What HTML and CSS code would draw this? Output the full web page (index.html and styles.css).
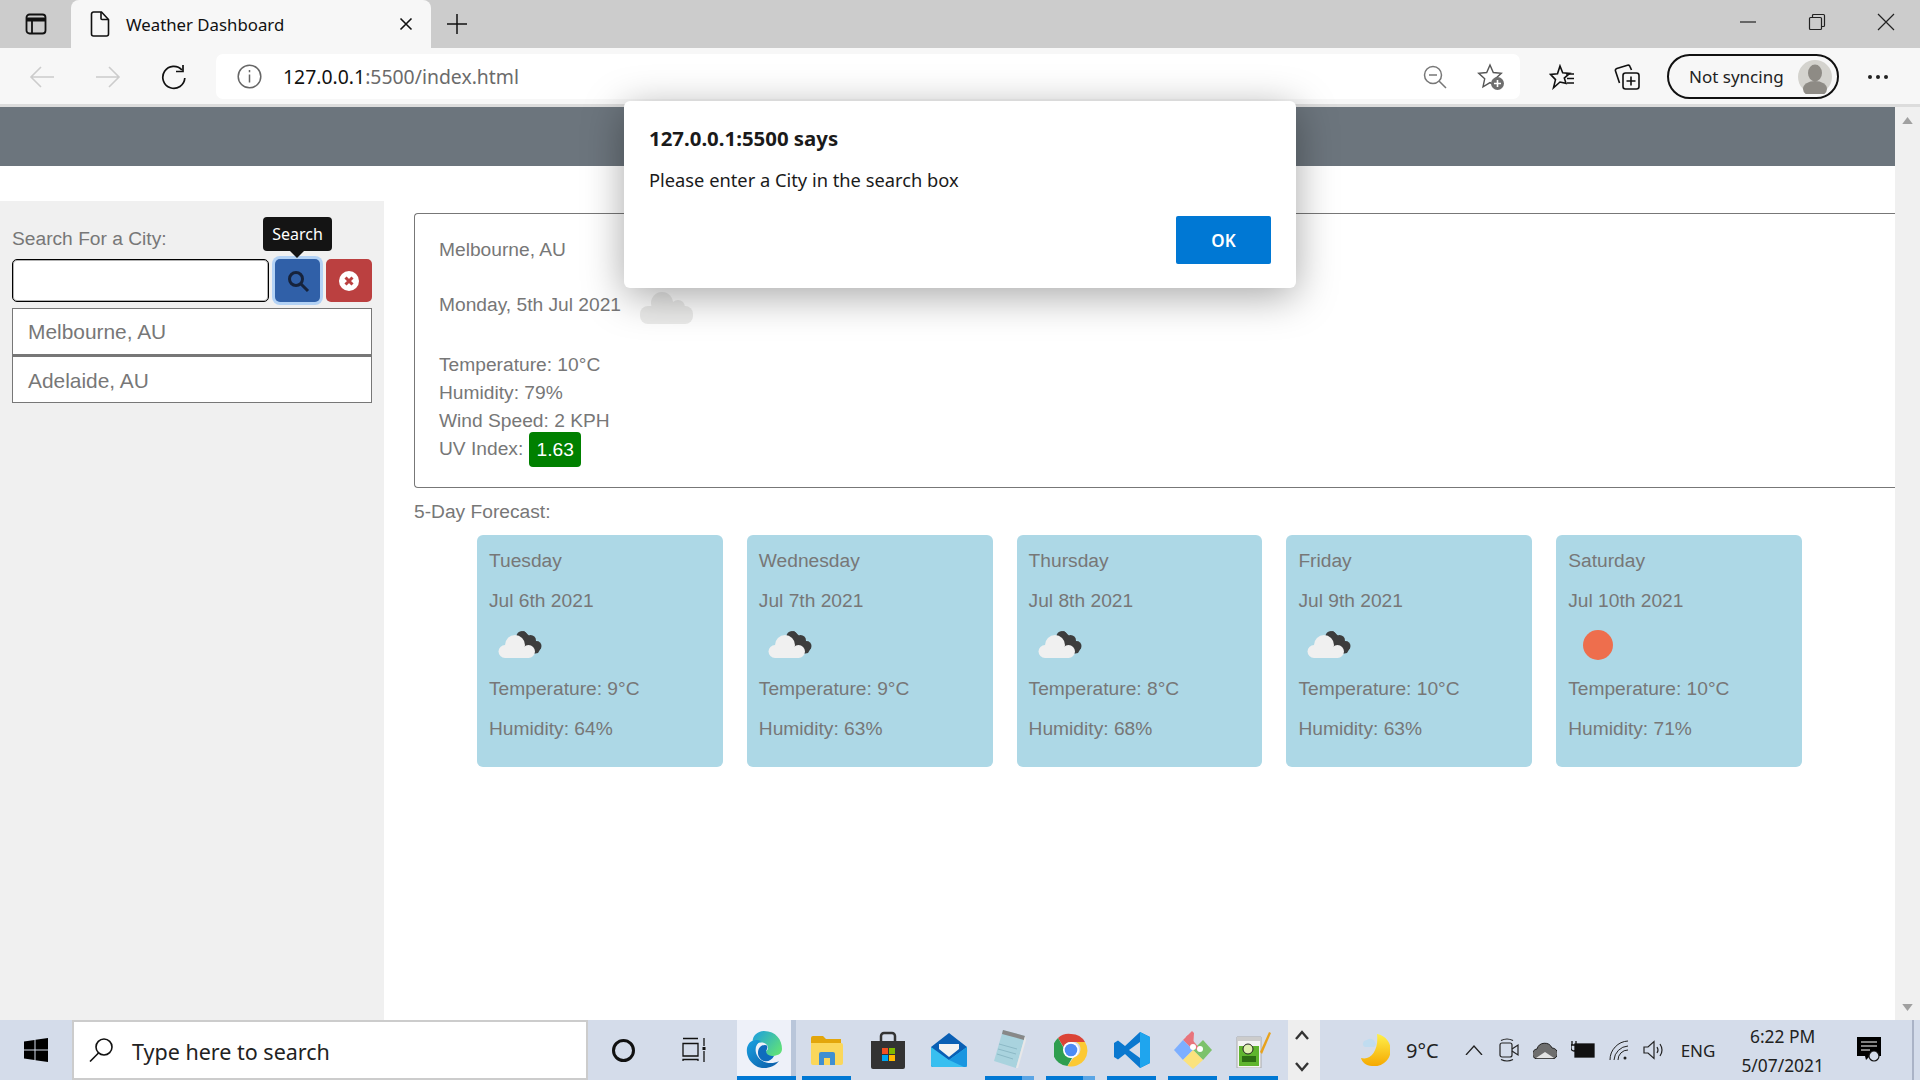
FILE: index.html
```html
<!DOCTYPE html>
<html lang="en">
<head>
    <meta charset="UTF-8">
    <title>Weather Dashboard</title>
    <link rel="stylesheet" href="styles.css">
</head>
<body>
<svg class="defs" width="0" height="0">
    <symbol id="cloud" viewBox="0 0 60 40">
        <path d="M21 9l6-3 14 13 3 4-3 5-10 2-12-10z" fill="#3d3d3d"/>
        <circle cx="25" cy="11.500" r="5.500" fill="#3d3d3d"/>
        <circle cx="33.500" cy="15.500" r="5.500" fill="#3d3d3d"/>
        <circle cx="39.500" cy="21" r="5" fill="#3d3d3d"/>
        <circle cx="8" cy="26.500" r="6.500" fill="#f0f0f0"/>
        <circle cx="18" cy="20" r="10" fill="#f0f0f0"/>
        <circle cx="31.500" cy="26.500" r="6.500" fill="#f0f0f0"/>
        <rect x="8" y="22" width="24" height="11" fill="#f0f0f0"/>
    </symbol>
</svg>

<div class="screen">
    <div class="tabstrip">
        <div class="tab-panel">
            <svg width="24" height="24" viewBox="0 0 24 24" fill="none" stroke="#111" stroke-width="1.800"><rect x="2.500" y="2.500" width="19" height="19" rx="3"/><path d="M3 7.500h18" stroke-width="4"/><path d="M8 8v13"/></svg>
        </div>
        <div class="tab">
            <svg width="20" height="26" viewBox="0 0 20 26" fill="none" stroke="#111" stroke-width="1.600"><path d="M3.500 1h8l7 7.500V23a2 2 0 0 1-2 2h-13a2 2 0 0 1-2-2V3a2 2 0 0 1 2-2z"/><path d="M11 1v6.500a1 1 0 0 0 1 1h6"/></svg>
            <span class="tab-title">Weather Dashboard</span>
            <svg class="tab-close" width="14" height="14" viewBox="0 0 14 14" stroke="#111" stroke-width="1.600"><path d="M1.500 1.500l11 11M12.500 1.500l-11 11"/></svg>
        </div>
        <svg class="new-tab" width="22" height="22" viewBox="0 0 22 22" stroke="#111" stroke-width="1.500"><path d="M11 1v20M1 11h20"/></svg>
        <div class="winbtns">
            <svg width="18" height="18" viewBox="0 0 18 18" stroke="#222" stroke-width="1.200" fill="none"><path d="M1 9h16"/></svg>
            <svg width="18" height="18" viewBox="0 0 18 18" stroke="#222" stroke-width="1.200" fill="none"><rect x="1.500" y="4.500" width="12" height="12" rx="1"/><path d="M4.500 4V2.500a1 1 0 0 1 1-1h10a1 1 0 0 1 1 1v10a1 1 0 0 1-1 1H14"/></svg>
            <svg width="18" height="18" viewBox="0 0 18 18" stroke="#222" stroke-width="1.200" fill="none"><path d="M1 1l16 16M17 1L1 17"/></svg>
        </div>
    </div>

    <div class="toolbar">
        <div class="navbtns">
            <svg width="26" height="26" viewBox="0 0 26 26" fill="none" stroke="#ccc" stroke-width="1.600"><path d="M25 13H2M12 3L2 13l10 10"/></svg>
            <svg width="26" height="26" viewBox="0 0 26 26" fill="none" stroke="#ccc" stroke-width="1.600"><path d="M1 13h23M14 3l10 10-10 10"/></svg>
            <svg width="26" height="26" viewBox="0 0 26 26" fill="none" stroke="#111" stroke-width="1.700"><path d="M21 6a11 11 0 1 0 2.800 8"/><path d="M22 1v6.500h-7"/></svg>
        </div>
        <div class="addressbar">
            <svg width="25" height="25" viewBox="0 0 25 25" fill="none" stroke="#666" stroke-width="1.500"><circle cx="12.500" cy="12.500" r="11.300"/><path d="M12.500 10.500v8M12.500 6v2.200"/></svg>
            <div class="url">127.0.0.1<span class="url-rest">:5500/index.html</span></div>
            <svg class="zoom-icon" width="24" height="24" viewBox="0 0 24 24" fill="none" stroke="#777" stroke-width="1.500"><circle cx="10" cy="10" r="8.500"/><path d="M16 16l7 7M6 10h8"/></svg>
            <svg class="fav-add" width="28" height="28" viewBox="0 0 28 28"><path d="M13 2l3.300 7.500 8 .8-6 5.500 1.700 8-7-4.200-7 4.200 1.700-8-6-5.500 8-.8z" fill="none" stroke="#555" stroke-width="1.400"/><circle cx="20.500" cy="20.500" r="6.500" fill="#6e6e6e"/><path d="M20.500 17v7M17 20.500h7" stroke="#fff" stroke-width="1.600"/></svg>
        </div>
        <div class="toolbar-right">
            <svg class="tool-fav" width="26" height="26" viewBox="0 0 26 26" fill="none" stroke="#111" stroke-width="1.600"><path d="M11 2l2.700 6.800 7 .6-5.400 4.700 1.700 5.200-6-1.300-6.500 5.800 2-8.200-5-5.200 7-.6z"/><path d="M17 10h8M18 14.500h7M18 19h7"/></svg>
            <svg class="tool-coll" width="26" height="26" viewBox="0 0 26 26" fill="none" stroke="#111" stroke-width="1.600"><rect x="9" y="9" width="16" height="16" rx="2.500"/><path d="M17 12.500v9M12.500 17h9"/><path d="M5.500 19L1.500 7a2 2 0 0 1 1.300-2.500L13.500 1.300a2 2 0 0 1 2.500 1.300L17.500 6"/></svg>
            <div class="sync-pill">
                <span>Not syncing</span>
                <svg width="34" height="34" viewBox="0 0 34 34"><circle cx="17" cy="17" r="17" fill="#d4d3ce"/><ellipse cx="17" cy="13" rx="7" ry="8.500" fill="#8e8b85"/><ellipse cx="17" cy="29" rx="12" ry="8" fill="#8e8b85"/></svg>
            </div>
            <div class="more-dots"><i></i><i></i><i></i></div>
        </div>
    </div>

    <div class="viewport">
        <div class="page">
            <div class="page-header"></div>
            <div class="content">
                <aside class="sidebar">
                    <div class="search-label">Search For a City:</div>
                    <div class="search-row">
                        <input class="search-input" type="text">
                        <button class="icon-btn btn-search">
                            <svg width="24" height="24" viewBox="0 0 24 24" fill="none" stroke="#16233c" stroke-width="3"><circle cx="10" cy="10" r="6.500"/><path d="M15 15l7 7"/></svg>
                            <span class="tooltip">Search</span>
                        </button>
                        <button class="icon-btn btn-clear">
                            <svg width="22" height="22" viewBox="0 0 22 22"><circle cx="11" cy="11" r="10" fill="#fff"/><path d="M7.500 7.500l7 7M14.500 7.500l-7 7" stroke="#bb4040" stroke-width="3"/></svg>
                        </button>
                    </div>
                    <ul class="city-list">
                        <li>Melbourne, AU</li>
                        <li>Adelaide, AU</li>
                    </ul>
                </aside>
                <main class="main">
                    <section class="current">
                        <div class="city">Melbourne, AU</div>
                        <div class="date-row">
                            <span>Monday, 5th Jul 2021</span>
                            <svg class="current-icon" width="54" height="34" viewBox="0 0 54 34" fill="#ebebea"><circle cx="22" cy="12" r="11"/><circle cx="38" cy="16" r="7"/><rect y="15" width="53" height="18" rx="8"/></svg>
                        </div>
                        <div class="stats">
                            <div>Temperature: 10°C</div>
                            <div>Humidity: 79%</div>
                            <div>Wind Speed: 2 KPH</div>
                            <div class="uv-row">UV Index: <span class="uv">1.63</span></div>
                        </div>
                    </section>
                    <div class="forecast-title">5-Day Forecast:</div>
                    <div class="forecast">
                        <div class="day-card">
                            <p>Tuesday</p><p>Jul 6th 2021</p>
                            <div class="day-icon"><svg width="60" height="40"><use href="#cloud"/></svg></div>
                            <p>Temperature: 9°C</p><p>Humidity: 64%</p>
                        </div>
                        <div class="day-card">
                            <p>Wednesday</p><p>Jul 7th 2021</p>
                            <div class="day-icon"><svg width="60" height="40"><use href="#cloud"/></svg></div>
                            <p>Temperature: 9°C</p><p>Humidity: 63%</p>
                        </div>
                        <div class="day-card">
                            <p>Thursday</p><p>Jul 8th 2021</p>
                            <div class="day-icon"><svg width="60" height="40"><use href="#cloud"/></svg></div>
                            <p>Temperature: 8°C</p><p>Humidity: 68%</p>
                        </div>
                        <div class="day-card">
                            <p>Friday</p><p>Jul 9th 2021</p>
                            <div class="day-icon"><svg width="60" height="40"><use href="#cloud"/></svg></div>
                            <p>Temperature: 10°C</p><p>Humidity: 63%</p>
                        </div>
                        <div class="day-card">
                            <p>Saturday</p><p>Jul 10th 2021</p>
                            <div class="day-icon"><svg width="60" height="40"><circle cx="22" cy="20" r="15" fill="#ee6e4d"/></svg></div>
                            <p>Temperature: 10°C</p><p>Humidity: 71%</p>
                        </div>
                    </div>
                </main>
            </div>
        </div>
        <div class="scrollbar">
            <svg width="11" height="7" viewBox="0 0 12 8"><path d="M6 0l6 8H0z" fill="#a0a0a0"/></svg>
            <svg width="11" height="7" viewBox="0 0 12 8"><path d="M6 8L0 0h12z" fill="#a0a0a0"/></svg>
        </div>
    </div>

    <div class="taskbar">
        <div class="start">
            <svg width="24" height="24" viewBox="0 0 24 24" fill="#000"><path d="M0 3.500l10.500-1.500v9.500H0zM11.500 1.800L24 0v11.500H11.500zM0 12.500h10.500V22L0 20.500zM11.500 12.500H24V24l-12.500-1.800z"/></svg>
        </div>
        <div class="task-search">
            <svg width="24" height="24" viewBox="0 0 24 24" fill="none" stroke="#111" stroke-width="1.600"><circle cx="15" cy="9" r="8"/><path d="M9.500 15L1 23.500"/></svg>
            <span>Type here to search</span>
        </div>
        <div class="cortana"><i></i></div>
        <div class="taskview">
            <svg width="26" height="26" viewBox="0 0 26 26" fill="none" stroke="#111" stroke-width="1.300"><path d="M1 1.500h15M1 6.500h15V19H1zM1 24v-1.500h15V24M22 1v8M22 14v11"/><rect x="20.500" y="10" width="3" height="3" fill="#111" stroke="none"/></svg>
        </div>
        <div class="task-item active run-edge">
            <svg width="36" height="38" viewBox="0 0 36 38">
                <defs>
                    <linearGradient id="edgeTop" x1="0" y1="0" x2="1" y2="0.700"><stop offset="0" stop-color="#1b9de2"/><stop offset="1" stop-color="#5fe07a"/></linearGradient>
                    <linearGradient id="edgeLow" x1="0" y1="0" x2="1" y2="1"><stop offset="0" stop-color="#1aa0e0"/><stop offset="1" stop-color="#0c5aa6"/></linearGradient>
                </defs>
                <path d="M18 0C30 0 36 9 36 18c0 5-5 7-10 7-6 0-7-3-6-5 2-1 3-3 1-6-3-4-10-3-13 1C4 9 9 0 18 0z" fill="url(#edgeTop)"/>
                <path d="M1 17C3 9 10 8 15 10c-6 3-7 10-3 16 4 6 14 8 21 4-5 7-16 9-23 5C3 31 0 24 1 17z" fill="url(#edgeLow)"/>
                <path d="M12 22c0-5 3-8 7-8 3 0 3 3 1 6 0 3 3 5 8 5-2 4-6 6-10 5-4-1-6-5-6-8z" fill="#0f6cbd"/>
            </svg>
        </div>
        <div class="task-item run">
            <svg width="32" height="30" viewBox="0 0 32 30"><path d="M0 3a2 2 0 0 1 2-2h10l3 3h15v6H0z" fill="#e3a60b"/><path d="M0 8h30a2 2 0 0 1 2 2v18a2 2 0 0 1-2 2H2a2 2 0 0 1-2-2z" fill="#fbd75b"/><path d="M8 30V19a2 2 0 0 1 2-2h12a2 2 0 0 1 2 2v11h-5v-7h-6v7z" fill="#3f8fd2"/></svg>
        </div>
        <div class="task-item">
            <svg width="34" height="38" viewBox="0 0 34 38"><path d="M10 12V5a3 3 0 0 1 3-3h8a3 3 0 0 1 3 3v7" fill="none" stroke="#333" stroke-width="2.500"/><path d="M0 10h34v26a2 2 0 0 1-2 2H2a2 2 0 0 1-2-2z" fill="#333"/><rect x="11" y="17" width="6" height="6" fill="#f25022"/><rect x="18" y="17" width="6" height="6" fill="#7fba00"/><rect x="11" y="24" width="6" height="6" fill="#00a4ef"/><rect x="18" y="24" width="6" height="6" fill="#ffb900"/></svg>
        </div>
        <div class="task-item">
            <svg width="36" height="34" viewBox="0 0 36 34"><path d="M18 0l18 14v18a2 2 0 0 1-2 2H2a2 2 0 0 1-2-2V14z" fill="#0a5fb4"/><path d="M8 11h20v5l-10 8-10-8z" fill="#f2f2f2"/><path d="M0 14l18 13 18-13v18a2 2 0 0 1-2 2H2a2 2 0 0 1-2-2z" fill="#38bff0"/><path d="M18 27l18-13v18a2 2 0 0 1-2 2h-1z" fill="#1a96e0"/></svg>
        </div>
        <div class="task-item run split">
            <svg width="34" height="40" viewBox="0 0 34 40"><path d="M10 0l22 6-9 32-22-7z" fill="#a9d3de"/><path d="M10 0l22 6-1 4-22-6z" fill="#888"/><path d="M32 6l1 4-8 28h-2z" fill="#e8e8e8"/><path d="M6 14l18 5M5 19l18 5M4 24l16 5" stroke="#8cb9c6" stroke-width="1"/></svg>
        </div>
        <div class="task-item run split">
            <svg width="34" height="34" viewBox="0 0 34 34">
                <path d="M17 1a16 16 0 0 1 14 8H17a8 8 0 0 0-7.500 5L4 5a16 16 0 0 1 13-4z" fill="#db4437"/>
                <path d="M4 5l7.500 13a8 8 0 0 0 6.500 7l-4.500 8A16 16 0 0 1 4 5z" fill="#2e9e4f"/>
                <path d="M31 9a16 16 0 0 1-17.500 24L20 24a8 8 0 0 0 2-15z" fill="#fcc934"/>
                <circle cx="17" cy="17" r="8" fill="#fff"/><circle cx="17" cy="17" r="6.300" fill="#4d8bf5"/>
            </svg>
        </div>
        <div class="task-item run">
            <svg width="36" height="36" viewBox="0 0 36 36"><path d="M26 0l10 5v26l-10 5-15-14 -7 5.500-4-2.500v-14l4-2.500 7 5.500z" fill="#0a78cf"/><path d="M26 10L15 18l11 8z" fill="#d4dcea"/><path d="M26 0l10 5v26l-10 5z" fill="#1fa5ee"/></svg>
        </div>
        <div class="task-item run">
            <svg width="38" height="38" viewBox="0 0 38 38"><path d="M19 19L9 9l9-9 2 2z" fill="#e8747c"/><path d="M19 19L29 9l9 10-9 10z" fill="#7cc26b"/><path d="M19 19L9 9 0 19l9 10z" fill="#7dafff"/><path d="M19 19L9 29l10 9 10-9z" fill="#fbe27c"/><path d="M13 5l12 14" stroke="#e8747c" stroke-width="3"/><circle cx="19" cy="16" r="3" fill="#fff"/><circle cx="26" cy="18" r="3" fill="#fff"/></svg>
        </div>
        <div class="task-item run">
            <svg width="36" height="36" viewBox="0 0 36 36"><path d="M1 5h24v31H1z" fill="#f4f4f4" stroke="#aaa"/><rect x="3" y="14" width="20" height="20" fill="#5fb52e"/><path d="M1 5h24v4H1z" fill="#ccc"/><circle cx="12" cy="17" r="5" fill="#dff0b0" stroke="#222"/><path d="M6 24h14v6H6z" fill="#2c6e12"/><path d="M35 1l-2-1-9 20 2 2z" fill="#e8a21c"/></svg>
        </div>
        <div class="overflow-arrows">
            <svg width="14" height="10" viewBox="0 0 14 10" fill="none" stroke="#333" stroke-width="2.400"><path d="M1 9l6-7 6 7"/></svg>
            <svg width="14" height="10" viewBox="0 0 14 10" fill="none" stroke="#333" stroke-width="2.400"><path d="M1 1l6 7 6-7"/></svg>
        </div>
        <div class="tray">
            <svg class="tray-moon" width="30" height="32" viewBox="0 0 30 32"><defs><linearGradient id="moon" x1="0" y1="0" x2="0" y2="1"><stop offset="0" stop-color="#fff04a"/><stop offset="1" stop-color="#f5a800"/></linearGradient></defs><path d="M17 0a16 16 0 0 1-5 32C6 32 2 28 1 24c10 3 18-8 16-24z" fill="url(#moon)"/><path d="M3 11a4 4 0 0 1 4-5 5 5 0 0 1 8 2 3 3 0 0 1-1 5H5a3 3 0 0 1-2-2z" fill="#c0dcf0"/></svg>
            <span class="tray-temp">9°C</span>
            <svg class="tray-caret" width="18" height="10" viewBox="0 0 18 10" fill="none" stroke="#222" stroke-width="1.300"><path d="M1 10l8-9 8 9"/></svg>
            <svg class="tray-icon" width="20" height="26" viewBox="0 0 20 26" fill="none" stroke="#222" stroke-width="1.200"><rect x="1" y="6" width="12" height="14" rx="2"/><path d="M13 12l6-4v10l-6-4M2 3.500Q8 .5 14 3.500M2 22.500q6 3 12 0"/></svg>
            <svg class="tray-icon" width="24" height="18" viewBox="0 0 24 18"><path d="M5 18a5 5 0 0 1-1-10 8 8 0 0 1 15-1 5.500 5.500 0 0 1 0 11z" fill="#6e6e6e" stroke="#222"/><path d="M3 17l9-6 9 6" fill="#e4e4e4"/></svg>
            <svg class="tray-icon" width="24" height="20" viewBox="0 0 24 20" fill="none" stroke="#111" stroke-width="1.300"><rect x="4" y="4" width="19" height="13" fill="#111"/><path d="M1 1v4M5 1v4M0 5h6v3a3 3 0 0 1-6 0z"/></svg>
            <svg class="tray-icon" width="20" height="22" viewBox="0 0 20 22" fill="none" stroke="#222" stroke-width="1"><path d="M1 21a19 19 0 0 1 18-19M5 21A15 15 0 0 1 19 7M9 21a10 10 0 0 1 10-10"/><circle cx="16" cy="19" r="1.500" fill="#222" stroke="none"/></svg>
            <svg class="tray-icon" width="22" height="20" viewBox="0 0 22 20" fill="none" stroke="#222" stroke-width="1.200"><path d="M1 7h4l6-5.500v17L5 13H1zM14 7q2 3 0 6M17 4q4 6 0 12"/></svg>
            <span class="tray-lang">ENG</span>
            <div class="clock"><span>6:22 PM</span><span>5/07/2021</span></div>
            <svg class="tray-note" width="24" height="26" viewBox="0 0 24 26"><path d="M0 0h24v19H13l-4 4-1-4H0z" fill="#000"/><path d="M4 5h16M4 9h16M4 13h9" stroke="#fff" stroke-width="1.200"/><circle cx="17" cy="19" r="5" fill="#d4dcea" stroke="#111" stroke-width="1.200"/></svg>
            <i class="show-desktop"></i>
        </div>
    </div>

    <div class="dialog">
        <div class="dialog-title">127.0.0.1:5500 says</div>
        <div class="dialog-msg">Please enter a City in the search box</div>
        <div class="dialog-actions"><button class="dialog-ok">OK</button></div>
    </div>
</div>
</body>
</html>
```

FILE: styles.css
```css
html, body {
    margin: 0;
    height: 100%;
    overflow: hidden;
}

body {
    font-family: "Liberation Sans", Arial, sans-serif;
    color: #777;
}

.defs {
    position: absolute;
}

.screen {
    display: flex;
    flex-direction: column;
    height: 1080px;
    position: relative;
}

/* browser chrome */
.tabstrip {
    display: flex;
    align-items: flex-start;
    height: 48px;
    background-color: #cccccc;
    flex-shrink: 0;
}

.tab-panel {
    width: 71px;
    height: 48px;
    display: flex;
    align-items: center;
    justify-content: center;
}

.tab {
    width: 360px;
    height: 48px;
    display: flex;
    align-items: center;
    background-color: #f7f7f7;
    border-radius: 8px 8px 0 0;
    padding-left: 19px;
    box-sizing: border-box;
    font-family: "Noto Sans", sans-serif;
    color: #111;
}

.tab-title {
    margin-left: 16px;
    font-size: 16.800px;
    width: 273px;
}

.new-tab {
    margin: 13px 0 0 15px;
}

.winbtns {
    margin-left: auto;
    display: flex;
    gap: 51px;
    padding: 13px 25px 0 0;
}

.toolbar {
    display: flex;
    align-items: center;
    height: 59px;
    flex-shrink: 0;
    background-color: #f7f7f7;
    border-bottom: 3px solid #dcdcdc;
    box-sizing: border-box;
    padding-top: 1px;
}

.navbtns {
    display: flex;
    gap: 40px;
    padding-left: 29px;
    width: 216px;
    box-sizing: border-box;
}

.addressbar {
    width: 1304px;
    height: 45px;
    background-color: #fff;
    border-radius: 7px;
    display: flex;
    align-items: center;
    padding-left: 21px;
    box-sizing: border-box;
    font-family: "Noto Sans", sans-serif;
}

.url {
    margin-left: 21px;
    font-size: 19.400px;
    color: #111;
    width: 1140px;
}

.url-rest {
    color: #6b6b6b;
}

.fav-add {
    margin-left: 30px;
}

.toolbar-right {
    display: flex;
    align-items: center;
    font-family: "Noto Sans", sans-serif;
}

.tool-fav {
    margin-left: 29px;
}

.tool-coll {
    margin-left: 39px;
}

.sync-pill {
    margin-left: 27px;
    width: 172px;
    height: 45px;
    border: 2px solid #111;
    border-radius: 23px;
    display: flex;
    align-items: center;
    justify-content: space-between;
    box-sizing: border-box;
    padding: 0 5px 0 20px;
    font-size: 17px;
    color: #222;
}

.more-dots {
    display: flex;
    gap: 4px;
    margin-left: 29px;
}

.more-dots i {
    width: 4px;
    height: 4px;
    border-radius: 50%;
    background-color: #222;
}

/* page */
.viewport {
    display: flex;
    height: 913px;
    flex-shrink: 0;
}

.page {
    flex: 1;
    overflow: hidden;
    background-color: #fff;
}

.page-header {
    height: 59px;
    background-color: #6c757d;
    margin-bottom: 35px;
}

.content {
    display: flex;
    height: 819px;
}

.sidebar {
    width: 384px;
    flex-shrink: 0;
    background-color: #f0f0f0;
    box-sizing: border-box;
    padding: 24px 12px 0;
}

.search-label {
    font-size: 19.200px;
    line-height: 28px;
    margin-bottom: 6px;
}

.search-row {
    display: flex;
    gap: 6px;
    height: 43px;
    margin-bottom: 6px;
}

.search-input {
    width: 257px;
    box-sizing: border-box;
    border: 1px solid #000;
    box-shadow: inset 0 0 0 1px rgba(0, 0, 0, 0.3);
    border-radius: 5px;
    background-color: #fff;
    margin: 0;
    padding: 0;
}

.icon-btn {
    width: 45px;
    border: none;
    border-radius: 5px;
    padding: 0;
    position: relative;
    display: flex;
    align-items: center;
    justify-content: center;
}

.btn-search {
    background-color: #3060a8;
    box-shadow: 0 0 0 3px #b3d2f5;
}

.btn-clear {
    background-color: #bb4040;
    width: 46px;
}

.tooltip {
    position: absolute;
    left: -12px;
    top: -42px;
    width: 69px;
    height: 34px;
    background-color: #141414;
    color: #fff;
    border-radius: 4px;
    font: 16px/35px "Noto Sans", sans-serif;
    text-align: center;
}

.tooltip::after {
    content: "";
    position: absolute;
    left: 27px;
    bottom: -7px;
    border: 7px solid transparent;
    border-bottom: 0;
    border-top-color: #141414;
}

.city-list {
    list-style: none;
    margin: 0;
    padding: 0;
    font-size: 20.900px;
}

.city-list li {
    height: 47px;
    line-height: 46px;
    border: 1px solid #777;
    padding-left: 15px;
    background-color: #fff;
    box-sizing: border-box;
}

.city-list li + li {
    height: 48px;
    line-height: 47px;
    border-top-width: 2px;
}

.main {
    flex: 1;
    min-width: 0;
    padding: 12px 0 0 30px;
    font-size: 19.200px;
    line-height: 28px;
}

.current {
    border: 1px solid #777;
    border-right: none;
    border-radius: 4px 0 0 4px;
    height: 275px;
    box-sizing: border-box;
    padding: 22px 0 0 24px;
}

.city {
    margin-bottom: 27px;
}

.date-row {
    display: flex;
    align-items: center;
    height: 28px;
    margin-bottom: 32px;
}

.current-icon {
    margin: 6px 0 0 19px;
    flex-shrink: 0;
}

.uv-row {
    display: flex;
    align-items: center;
    height: 28px;
}

.uv {
    width: 52px;
    height: 35px;
    line-height: 35px;
    background-color: #008000;
    color: #fff;
    border-radius: 4px;
    text-align: center;
    margin-left: 6px;
}

.forecast-title {
    margin: 10px 0 9px;
}

.forecast {
    display: flex;
    gap: 24px;
    padding-left: 63px;
}

.day-card {
    width: 245.800px;
    height: 232px;
    background-color: #add8e6;
    border-radius: 6px;
    box-sizing: border-box;
    padding: 12px 12px 0;
}

.day-card p {
    margin: 0 0 11.500px;
}

.day-icon {
    height: 46px;
    margin: -4px 0 7px;
    display: flex;
    align-items: center;
    padding-left: 8px;
}

.scrollbar {
    width: 25px;
    background-color: #f0f0f0;
    display: flex;
    flex-direction: column;
    align-items: center;
    justify-content: space-between;
    padding: 10px 0 9px;
    box-sizing: border-box;
}

/* windows taskbar */
.taskbar {
    display: flex;
    align-items: stretch;
    height: 60px;
    flex-shrink: 0;
    background-color: #d4dcea;
}

.start {
    width: 72px;
    display: flex;
    align-items: center;
    justify-content: center;
}

.task-search {
    width: 516px;
    display: flex;
    align-items: center;
    gap: 19px;
    background-color: #fff;
    border: 2px solid #cccccc;
    box-sizing: border-box;
    padding: 3px 0 0 15px;
    font: 21.500px "Noto Sans", sans-serif;
    color: #222;
}

.task-search svg {
    margin-top: -3px;
}

.cortana {
    width: 71px;
    display: flex;
    align-items: center;
    justify-content: center;
}

.cortana i {
    width: 17px;
    height: 17px;
    border: 3.500px solid #111;
    border-radius: 50%;
}

.taskview {
    width: 78px;
    display: flex;
    align-items: center;
    justify-content: center;
    box-sizing: border-box;
    padding-right: 6px;
}

.task-item {
    width: 61px;
    display: flex;
    align-items: center;
    justify-content: center;
    position: relative;
}

.run::after {
    content: "";
    position: absolute;
    left: 6px;
    right: 6px;
    bottom: 0;
    height: 4px;
    background-color: #0078d4;
}

.split::after {
    background: linear-gradient(90deg, #0078d4 75%, #5aa5e5 75%);
}

.run-edge {
    background-color: #eef1f9;
    border-right: 5px solid #b9c6da;
    width: 59px;
    box-sizing: border-box;
}

.run-edge::after {
    content: "";
    position: absolute;
    left: 0;
    right: -5px;
    bottom: 0;
    height: 4px;
    background-color: #0078d4;
}

.overflow-arrows {
    width: 32px;
    margin-left: 4px;
    background-color: #eeeeee;
    display: flex;
    flex-direction: column;
    align-items: center;
    justify-content: space-between;
    padding: 10px 5px 8px 0;
    box-sizing: border-box;
}

.tray {
    flex: 1;
    display: flex;
    align-items: center;
    font: 20px "Noto Sans", sans-serif;
    color: #222;
}

.tray-moon {
    margin-left: 40px;
}

.tray-temp {
    margin-left: 16px;
}

.tray-caret {
    margin-left: 26px;
}

.tray-icon {
    margin-left: 14px;
}

.tray-icon:nth-of-type(3) {
    margin-left: 16px;
}

.tray-lang {
    margin-left: 16px;
    font-size: 17px;
}

.clock {
    display: flex;
    flex-direction: column;
    align-items: center;
    gap: 6px;
    margin-left: 26px;
    padding-top: 2px;
    font-size: 17.400px;
    line-height: 23px;
}

.tray-note {
    margin-left: 33px;
}

.show-desktop {
    width: 2px;
    height: 60px;
    margin-left: auto;
    margin-right: 6px;
    background-color: #aab3c6;
}

/* alert */
.dialog {
    position: absolute;
    left: 624px;
    top: 101px;
    width: 672px;
    height: 187px;
    background-color: #fff;
    border-radius: 6px;
    box-shadow: 0 8px 40px rgba(0, 0, 0, 0.35);
    box-sizing: border-box;
    padding: 23px 25px 0 25px;
    font-family: "Noto Sans", sans-serif;
    color: #1a1a1a;
}

.dialog-title {
    font-weight: 700;
    font-size: 20.400px;
    line-height: 28px;
}

.dialog-msg {
    font-size: 18.300px;
    line-height: 28px;
    margin-top: 14px;
}

.dialog-actions {
    display: flex;
    justify-content: flex-end;
    margin-top: 22px;
}

.dialog-ok {
    width: 95px;
    height: 48px;
    border: none;
    border-radius: 2px;
    background-color: #0078d4;
    color: #fff;
    font: 600 17px "Noto Sans", sans-serif;
}
```
